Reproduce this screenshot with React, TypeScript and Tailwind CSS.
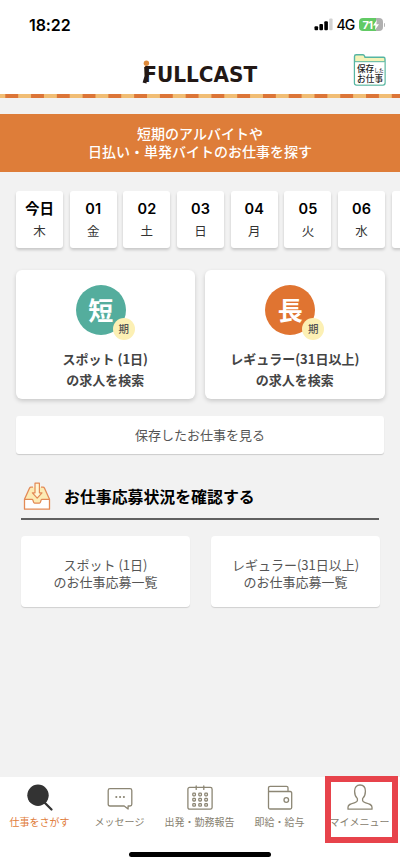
import type { ReactNode } from 'react'

const days = [
  { date: '今日', weekday: '木' },
  { date: '01', weekday: '金' },
  { date: '02', weekday: '土' },
  { date: '03', weekday: '日' },
  { date: '04', weekday: '月' },
  { date: '05', weekday: '火' },
  { date: '06', weekday: '水' },
]

function StatusBar() {
  return (
    <div className="flex h-[49px] items-center justify-between pl-[29px] pr-[15px]">
      <span className="font-['Inter',sans-serif] text-[16px] font-semibold leading-4 tracking-[-0.1px] text-black">18:22</span>
      <div className="flex items-center">
        <svg width="19" height="13" viewBox="0 0 19 13">
          <rect x="0.5" y="8.2" width="3.6" height="4" rx="1" fill="#000" />
          <rect x="5.4" y="6" width="3.6" height="6.2" rx="1" fill="#000" />
          <rect x="10.3" y="3.3" width="3.6" height="8.9" rx="1" fill="#000" />
          <rect x="15.2" y="0.5" width="3.4" height="11.7" rx="1" fill="#d2d2d2" />
        </svg>
        <span className="ml-[4px] w-[22px] font-['Inter',sans-serif] text-[14px] font-medium leading-4 tracking-[-0.9px] text-black">4G</span>
        <div className="flex h-[13px] w-[24px] items-center justify-center rounded-[4px] bg-linear-to-r from-[#62ca65] from-72% to-[#b0b0b0] to-72%">
          <span className="font-['Inter',sans-serif] text-[11px] font-bold leading-3 tracking-[-0.5px] text-white">71</span>
          <svg width="6" height="10" viewBox="0 0 6 10"><path d="M3.8 0 0 5.5h2.4L2 10l4-5.7H3.4z" fill="#fff" /></svg>
        </div>
        <span className="ml-px h-[4px] w-[1.5px] rounded-r-full bg-[#b5b5b5]" />
      </div>
    </div>
  )
}

function Logo() {
  return (
    <svg width="118" height="28" viewBox="0 0 118 28" role="img" aria-label="FULLCAST">
      <circle cx="4.4" cy="3.2" r="2.7" fill="#de8a3a" />
      <path d="M2.2 7h4.4v9.5L4.4 18.5l.2 5-2.2-.6L.6 22.5 2.6 16z" fill="#231815" />
      <text x="1.2" y="22.4" textLength="114" lengthAdjust="spacingAndGlyphs" fill="#231815" className="font-['DejaVu_Sans',sans-serif] text-[21.2px] font-bold">FULLCAST</text>
    </svg>
  )
}

function SavedFolder() {
  return (
    <svg width="34" height="34" viewBox="0 0 34 34">
      <path d="M1.5 30V3.5Q1.5 1.8 3.2 1.8H10Q11 1.8 11.5 3L12 4.3H30.5Q32 4.3 32 6V30Q32 32 30 32H3.5Q1.5 32 1.5 30z" fill="#f5f3b8" stroke="#55b5a3" strokeWidth="1.4" />
      <path d="M2.1 9h29.3v20.8q0 1.6-1.6 1.6H3.7q-1.6 0-1.6-1.6z" fill="#fff" />
      <path d="M2 8.7h29.5" stroke="#55b5a3" strokeWidth="1" />
      <g className="font-['Noto_Sans_CJK_JP',sans-serif] font-medium" fill="#222">
        <text x="4" y="19.3" fontSize="8.6">保存</text>
        <text x="21.3" y="19.3" fontSize="4.6">した</text>
        <text x="4" y="29.1" fontSize="8.7">お仕事</text>
      </g>
    </svg>
  )
}

function DownloadTray() {
  return (
    <svg width="28" height="29" viewBox="0 0 28 29" strokeLinejoin="round">
      <path d="M7.5 5.2h13l6 12.8v9H1.5v-9z" fill="#fcebb4" />
      <path d="M1.5 17.3h7.8c1 0 .7 3.9 2.2 3.9h5c1.5 0 1.2-3.9 2.2-3.9h7.8v9.9h-25z" fill="#fff" stroke="#e38a55" strokeWidth="1.3" />
      <path d="M10 5.2H8Q7 5.2 6.6 6L1.5 17.3M18 5.2h2q1 0 1.4.8l5.1 11.3" fill="none" stroke="#e38a55" strokeWidth="1.3" />
      <path d="M12 1.2h4.4v9.6h2.6L14.2 16.2 9.4 10.8H12z" fill="#fff6d5" stroke="#e38a55" strokeWidth="1.2" />
    </svg>
  )
}

function SearchCard({ mark, color, lines }: { mark: string; color: string; lines: string[] }) {
  return (
    <a className="flex h-[129px] flex-1 flex-col items-center rounded-[6px] bg-white pt-[15.5px] shadow-[0_2px_4px_rgba(0,0,0,0.17)]">
      <div className="relative h-[55px] w-[59px]">
        <div className={`flex size-[50px] items-center justify-center rounded-full pb-[2px] text-[25px] font-bold leading-none text-white ${color}`}>{mark}</div>
        <div className="absolute right-0 bottom-0 flex size-[22px] items-center justify-center rounded-full bg-[#fcf0b4] text-[10.5px] font-medium leading-none text-[#555]">期</div>
      </div>
      <div className="mt-[7.5px] text-center text-[13px] font-bold leading-[21.5px] text-[#444]">
        {lines.map(line => <p key={line}>{line}</p>)}
      </div>
    </a>
  )
}

function ListCard({ lines }: { lines: string[] }) {
  return (
    <a className="flex h-[71px] flex-1 flex-col items-center justify-center rounded-[4px] bg-white pt-[5px] text-[13px] leading-[16.5px] text-[#555] shadow-[0_1px_1px_rgba(0,0,0,0.14)]">
      {lines.map(line => <p key={line}>{line}</p>)}
    </a>
  )
}

function Tab({ label, active, children }: { label: string; active?: boolean; children: ReactNode }) {
  return (
    <a className="flex w-[80px] flex-col items-center pt-[6px]">
      <svg width="28" height="29" viewBox="0 0 28 29" fill="none" stroke="#8c8674" strokeWidth="1.3" strokeLinejoin="round" strokeLinecap="round">{children}</svg>
      <span className={`mt-[2px] whitespace-nowrap text-[10px] leading-[15px] ${active ? 'text-[#df7c3a]' : 'text-[#878170]'}`}>{label}</span>
    </a>
  )
}

function TabBar() {
  return (
    <nav className="relative h-[89px] bg-white">
      <div className="-ml-[0.5px] flex">
        <Tab label="仕事をさがす" active>
          <circle cx="12" cy="12.2" r="10.7" fill="#333" stroke="none" />
          <path d="m18.5 19.5 7 7" stroke="#333" strokeWidth="2.3" />
        </Tab>
        <Tab label="メッセージ">
          <path d="M4 5.6h20q1.8 0 1.8 1.8v13.8q0 1.8-1.8 1.8h-1.9v3L18.2 23H4q-1.8 0-1.8-1.8V7.4Q2.2 5.6 4 5.6z" />
          <path d="M10.2 14h.2M14 14h.2M17.8 14h.2" strokeWidth="1.9" />
        </Tab>
        <Tab label="出発・勤務報告">
          <rect x="1.9" y="4.4" width="24.2" height="21.8" rx="1.8" />
          <path d="M10.2 3v3.4M17.8 3v3.4" />
          {[10.2, 15.4, 20.6].map(y => [6.8, 12.8, 18.8].map(x => (
            <rect key={`${x}-${y}`} x={x} y={y} width="2.6" height="2.6" rx="0.8" />
          )))}
        </Tab>
        <Tab label="即給・給与">
          <path d="M2.5 8v16.5q0 1.5 1.5 1.5h20.2q1.5 0 1.5-1.5V10q0-1.5-1.5-1.5H3.8Q2.5 8.5 2.5 7V5q0-1.7 1.7-1.7h16.3q1.5 0 1.5 1.5v3.7" />
          <circle cx="20.3" cy="17" r="2.3" />
        </Tab>
        <Tab label="マイメニュー">
          <path d="M11.4 15.6C9.6 13.9 8.6 11 8.6 8.2 8.6 4.2 10.6 2 14 2s5.4 2.2 5.4 6.2c0 2.8-1 5.7-2.8 7.4v2c0 1.2 1 1.6 2.5 2 4 1.1 6.9 1.7 6.9 4.7v1.9H2v-1.9c0-3 2.9-3.6 6.9-4.7 1.5-.4 2.5-.8 2.5-2z" />
        </Tab>
      </div>
      <div className="absolute top-[-1px] left-[325px] h-[67px] w-[73px] border-[6.5px] border-[#e7434b]" />
      <div className="mx-auto mt-[23px] h-[5px] w-[142px] rounded-full bg-black" />
    </nav>
  )
}

export default function App() {
  return (
    <div className="flex h-[866px] w-[400px] flex-col overflow-hidden bg-[#f2f2f2] font-['Noto_Sans_CJK_JP',sans-serif]">
      <header className="bg-white">
        <StatusBar />
        <div className="flex h-[45px] items-start justify-between pt-[4px] pr-[13px] pl-[142px]">
          <div className="pt-[7px]"><Logo /></div>
          <SavedFolder />
        </div>
        <div className="h-[4px] bg-[linear-gradient(90deg,#dc7537_0_13px,#f1bd74_13px_26px)] bg-[position:5.3px_0] [background-size:25.77px_4px]" />
      </header>

      <main className="flex-1">
        <h1 className="mt-[16px] flex h-[57.5px] flex-col justify-center bg-[#de7d39] text-center text-[14px] font-medium leading-[17.5px] text-white">
          <span>短期のアルバイトや</span>
          <span>日払い・単発バイトのお仕事を探す</span>
        </h1>

        <div className="mt-[19.5px] flex gap-[6.7px] overflow-hidden pb-[6px] pl-4">
          {days.map(day => (
            <a key={day.date} className="flex h-[56.5px] w-[47px] shrink-0 flex-col items-center rounded-[3px] bg-white pt-[8px] shadow-[0_2px_3px_rgba(0,0,0,0.18)]">
              <span className="font-['Inter','Noto_Sans_CJK_JP',sans-serif] text-[14.5px] font-semibold leading-5 tracking-[0.1px] text-black">{day.date}</span>
              <span className="mt-[2px] text-[12.5px] leading-5 text-[#333]">{day.weekday}</span>
            </a>
          ))}
          <a className="h-[56.5px] w-[47px] shrink-0 rounded-[3px] bg-white shadow-[0_2px_3px_rgba(0,0,0,0.18)]" />
        </div>

        <div className="mt-[16px] flex gap-[10px] px-[15.5px]">
          <SearchCard mark="短" color="bg-[#54ad9d]" lines={['スポット (1日)', 'の求人を検索']} />
          <SearchCard mark="長" color="bg-[#e07431]" lines={['レギュラー(31日以上)', 'の求人を検索']} />
        </div>

        <a className="mx-4 mt-[17px] flex h-[38px] items-center justify-center rounded-[3px] bg-white text-[13px] text-[#555] shadow-[0_1px_1px_rgba(0,0,0,0.16)]">
          保存したお仕事を見る
        </a>

        <section className="mt-[28px] px-[21px]">
          <h2 className="flex h-[38.5px] items-start gap-[13px] border-b-2 border-[#606060] pl-[2px] text-[15.9px] font-bold leading-[30px] text-black">
            <DownloadTray />
            お仕事応募状況を確認する
          </h2>
          <div className="mt-[15.5px] -mr-px flex gap-[21px]">
            <ListCard lines={['スポット (1日)', 'のお仕事応募一覧']} />
            <ListCard lines={['レギュラー(31日以上)', 'のお仕事応募一覧']} />
          </div>
        </section>
      </main>

      <TabBar />
    </div>
  )
}
